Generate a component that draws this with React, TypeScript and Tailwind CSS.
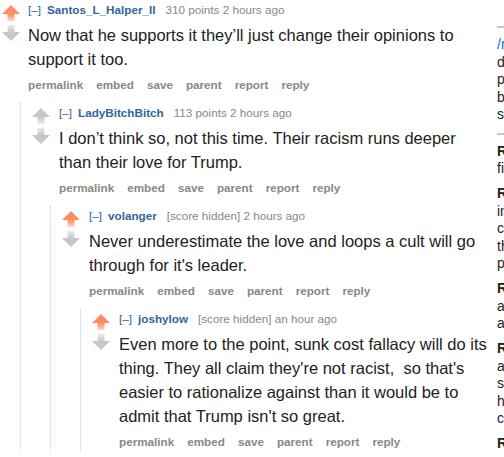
import { useId } from 'react'

type CommentData = {
  author: string
  score: string
  time: string
  upvoted: boolean
  body: string
  children?: CommentData[]
}

const thread: CommentData = {
  author: 'Santos_L_Halper_II',
  score: '310 points',
  time: '2 hours ago',
  upvoted: true,
  body: 'Now that he supports it they’ll just change their opinions to support it too.',
  children: [
    {
      author: 'LadyBitchBitch',
      score: '113 points',
      time: '2 hours ago',
      upvoted: false,
      body: 'I don’t think so, not this time. Their racism runs deeper than their love for Trump.',
      children: [
        {
          author: 'volanger',
          score: '[score hidden]',
          time: '2 hours ago',
          upvoted: true,
          body: "Never underestimate the love and loops a cult will go through for it's leader.",
          children: [
            {
              author: 'joshylow',
              score: '[score hidden]',
              time: 'an hour ago',
              upvoted: true,
              body: "Even more to the point, sunk cost fallacy will do its thing. They all claim they're not racist,\u00a0 so that's easier to rationalize against than it would be to admit that Trump isn't so great.",
            },
          ],
        },
      ],
    },
  ],
}

function Arrow({ dir, color }: { dir: 'up' | 'down'; color: string }) {
  const id = useId()
  const up = dir === 'up'
  return (
    <svg width="18" height="16" viewBox="0 0 18 16" className="block">
      <defs>
        <linearGradient id={id} x1="0" y1="0" x2="0" y2="1">
          {up ? (
            <>
              <stop offset="0.55" stopColor={color} />
              <stop offset="1" stopColor={color} stopOpacity="0.35" />
            </>
          ) : (
            <>
              <stop offset="0" stopColor={color} stopOpacity="0.35" />
              <stop offset="0.45" stopColor={color} />
            </>
          )}
        </linearGradient>
      </defs>
      <polygon
        fill={`url(#${id})`}
        points={up ? '9,0 18,9 12.5,9 12.5,16 5.5,16 5.5,9 0,9' : '5.5,0 12.5,0 12.5,7 18,7 9,16 0,7 5.5,7'}
      />
    </svg>
  )
}

function Comment({ c, nested }: { c: CommentData; nested: boolean }) {
  return (
    <div className={nested ? 'border-l border-dotted border-[#ccccf0] pl-[11px]' : 'pl-[2px]'}>
      <div className={nested ? 'flex gap-[9px]' : 'flex gap-[8px]'}>
        <div className="mt-[5px] flex w-[18px] shrink-0 flex-col gap-[4px]">
          <Arrow dir="up" color={c.upvoted ? '#ff8b60' : '#c6c6c6'} />
          <Arrow dir="down" color="#c6c6c6" />
        </div>
        <div className="min-w-0 flex-1">
          <div className="whitespace-nowrap text-[11.7px] leading-[20px]">
            <span className="text-[#369]">[–]</span>
            <span className="ml-[6px] font-bold text-[#369]">{c.author}</span>
            <span className="ml-[10px] text-[#888]">{c.score}</span>
            <span className="text-[#888]"> {c.time}</span>
          </div>
          <p className="mt-[3px] text-[16.5px] leading-[24px] text-[#222]">{c.body}</p>
          <div className="mt-[4px] flex gap-[13px] text-[11.7px] font-bold leading-[20px] text-[#888]">
            {['permalink', 'embed', 'save', 'parent', 'report', 'reply'].map((b) => (
              <span key={b}>{b}</span>
            ))}
          </div>
          {c.children && (
            <div className={nested ? 'mt-[8px] -ml-[9px]' : 'mt-[8px] -ml-[8px]'}>
              {c.children.map((k) => (
                <Comment key={k.author} c={k} nested />
              ))}
            </div>
          )}
        </div>
      </div>
    </div>
  )
}

const ruleBlocks: string[][] = [
  ['Rules are enforced at the moderators', 'final discretion.'],
  ['Rule 2: Submissions must be', 'in English and', 'contain the original title', 'that appears on the page', 'posted to reddit.'],
  ['Rule 3: Do not submit', 'articles older than a month', 'and no duplicates.'],
  ['Rule 4: Comments must be', 'about the topic at hand', 'so please stay civil and', 'have respect for others', 'commenting here.'],
  ['Rule 5: No spam.'],
]

export default function App() {
  return (
    <div className="flex h-[457px] w-full overflow-hidden bg-white font-['Liberation_Sans',Arial,sans-serif]">
      <div className="w-[490px] shrink-0">
        <Comment c={thread} nested={false} />
      </div>
      <div className="ml-[7px] w-[300px] shrink-0 pt-[26px] text-[14px] leading-[17.5px] text-[#222]">
        <div className="h-[2px] bg-[#cbc8b8]" />
        <div className="mt-[8px] whitespace-nowrap">
          <div className="text-[#0e6ebd]">/r/politics is for news and</div>
          <div>discussion about U.S. politics.</div>
          <div>please read the rules and</div>
          <div>be civil to each other when</div>
          <div>submitting or commenting.</div>
        </div>
        <div className="mt-[9px] h-[2px] bg-[#cbc8b8]" />
        <div className="mt-[8px] whitespace-nowrap">
          {ruleBlocks.map((block, i) => (
            <div key={i} className="mb-[7.5px]">
              {block.map((line, j) => (
                <div key={j}>
                  {j === 0 ? (
                    <>
                      <span className="font-bold">{line.split(' ')[0]}</span>
                      {line.slice(line.split(' ')[0].length)}
                    </>
                  ) : (
                    line
                  )}
                </div>
              ))}
            </div>
          ))}
        </div>
      </div>
    </div>
  )
}
